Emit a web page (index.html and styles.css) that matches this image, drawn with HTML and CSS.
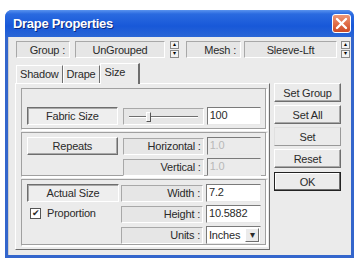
FILE: index.html
```html
<!DOCTYPE html>
<html lang="en">
<head>
	<meta charset="UTF-8">
	<title>Drape Properties</title>
	<link rel="stylesheet" href="styles.css">
</head>
<body>
	<div class="window">
		<div class="titlebar">
			<span class="title">Drape Properties</span>
			<span class="close">
				<svg width="13" height="13" viewBox="0 0 13 13"><path d="M2 2 L11 11 M11 2 L2 11" stroke="#fff" stroke-width="2.4" stroke-linecap="round"/></svg>
			</span>
		</div>
		<div class="client">
			<div class="toprow">
				<div class="field lbl group-lbl">Group :</div>
				<div class="field val group-val">UnGrouped</div>
				<div class="spin"><span>&#9652;</span><span>&#9662;</span></div>
				<div class="field lbl mesh-lbl">Mesh :</div>
				<div class="field val mesh-val">Sleeve-Lft</div>
				<div class="spin"><span>&#9652;</span><span>&#9662;</span></div>
			</div>
			<div class="main">
				<div class="tabarea">
					<div class="tabs">
						<div class="tab">Shadow</div>
						<div class="tab">Drape</div>
						<div class="tab active">Size</div>
					</div>
					<div class="panel">
						<div class="section sec-fabric">
							<div class="row">
								<div class="btn sunk wide">Fabric Size</div>
								<div class="field slider"><span class="track"></span><span class="thumb"></span></div>
								<div class="input">100</div>
							</div>
						</div>
						<div class="section sec-repeat">
							<div class="row">
								<div class="btn wide">Repeats</div>
								<div class="field cap">Horizontal :</div>
								<div class="input off">1.0</div>
							</div>
							<div class="row">
								<div class="spacer"></div>
								<div class="field cap">Vertical :</div>
								<div class="input off">1.0</div>
							</div>
						</div>
						<div class="section sec-actual">
							<div class="cols">
								<div class="leftcol">
									<div class="btn sunk wide">Actual Size</div>
									<label class="check"><span class="box">&#10004;</span>Proportion</label>
								</div>
								<div class="rightcol">
									<div class="row">
										<div class="field cap">Width :</div>
										<div class="input">7.2</div>
									</div>
									<div class="row">
										<div class="field cap">Height :</div>
										<div class="input">10.5882</div>
									</div>
									<div class="row">
										<div class="field cap">Units :</div>
										<div class="input select">Inches<span class="arrow">&#9662;</span></div>
									</div>
								</div>
							</div>
						</div>
					</div>
				</div>
				<div class="buttons">
					<div class="btn side">Set Group</div>
					<div class="btn side">Set All</div>
					<div class="btn side flat">Set</div>
					<div class="btn side">Reset</div>
					<div class="btn side ok">OK</div>
				</div>
			</div>
		</div>
	</div>
</body>
</html>
```

FILE: styles.css
```css
body {
	margin: 0;
	background: #fff;
	font-family: "Liberation Sans", Arial, sans-serif;
	font-size: 11px;
	letter-spacing: -0.2px;
	color: #2a2a2a;
}

.window {
	margin: 10px 0 0 5px;
	width: 349px;
	height: 248px;
	box-sizing: border-box;
	background: #3466cc;
	border-radius: 7px 7px 0 0;
	padding: 0 3px 3px 3px;
	display: flex;
	flex-direction: column;
}

.titlebar {
	height: 27px;
	margin: 0 -3px;
	padding: 0 3px 0 8px;
	border-radius: 7px 7px 0 0;
	background: linear-gradient(#5a93ee 0%, #2a6ae0 15%, #1858d8 60%, #2a66d6 100%);
	display: flex;
	align-items: center;
	justify-content: space-between;
}

.title {
	color: #fff;
	font-weight: bold;
	font-size: 13px;
	letter-spacing: -0.3px;
	text-shadow: 1px 1px 0 #0a2a80;
}

.close {
	width: 19px;
	height: 19px;
	box-sizing: border-box;
	border: 1px solid #fff;
	border-radius: 3px;
	background: linear-gradient(#ee9878, #de6a44 55%, #cc4a26);
	display: flex;
	align-items: center;
	justify-content: center;
}

.client {
	flex: 1;
	background: #ebebeb;
	border-left: 1px solid #cfcfcf;
	padding: 4px 0 0 7px;
}

.toprow {
	display: flex;
	align-items: center;
	height: 17px;
}

.field {
	box-sizing: border-box;
	background: #e6e6e6;
	border: 1px solid;
	border-color: #a8a8a8 #fff #fff #a8a8a8;
	height: 17px;
	display: flex;
	align-items: center;
}

.lbl {
	justify-content: flex-end;
	padding-right: 4px;
}

.val {
	justify-content: center;
}

.group-lbl { width: 54px; }
.group-val { width: 90px; margin-left: 5px; }
.mesh-lbl { width: 55px; margin-left: 7px; }
.mesh-val { width: 93px; margin-left: 3px; }

.spin {
	width: 9px;
	height: 17px;
	margin-left: 5px;
	display: flex;
	flex-direction: column;
	gap: 1px;
}

.spin span {
	flex: 1;
	background: #f2f2f2;
	border: 1px solid #8a8a8a;
	font-size: 6px;
	line-height: 5px;
	text-align: center;
	color: #000;
}

.mesh-val + .spin { margin-left: 4px; }

.main {
	display: flex;
	margin-top: 5px;
}

.tabarea {
	width: 255px;
	margin-left: -1px;
}

.tabs {
	display: flex;
	align-items: flex-end;
	height: 20px;
	padding-left: 1px;
}

.tab {
	height: 18px;
	box-sizing: border-box;
	padding: 2px 3px 0 3px;
	border: 1px solid #fff;
	border-right-color: #6e6e6e;
	border-bottom: none;
	background: #ebebeb;
}

.tab.active {
	height: 21px;
	margin-bottom: -1px;
	padding: 2px 13px 0 4px;
	position: relative;
	z-index: 1;
	border-right: 2px solid #6e6e6e;
}

.panel {
	box-sizing: border-box;
	height: 167px;
	border: 1px solid;
	border-color: #fff #6e6e6e #6e6e6e #fff;
	padding: 4px 2px 4px 5px;
}

.section {
	border: 1px solid;
	border-color: #a0a0a0 #fff #fff #a0a0a0;
	box-shadow: inset -1px -1px 0 #a0a0a0, 1px 1px 0 #fff;
	padding: 0 5px;
}

.sec-fabric {
	height: 42px;
	box-sizing: border-box;
	display: flex;
	align-items: flex-end;
	padding-bottom: 4px;
}

.sec-repeat {
	height: 45px;
	box-sizing: border-box;
	margin-top: 2px;
	padding-top: 4px;
	display: flex;
	flex-direction: column;
	gap: 3px;
}

.sec-actual {
	height: 67px;
	box-sizing: border-box;
	margin-top: 2px;
	padding-top: 4px;
}

.row {
	display: flex;
	align-items: center;
	gap: 3px;
}

.sec-fabric .row,
.sec-repeat .row {
	width: 100%;
}

.btn {
	box-sizing: border-box;
	height: 18px;
	display: flex;
	align-items: center;
	justify-content: center;
	background: #ebebeb;
	border: 1px solid;
	border-color: #fff #6e6e6e #6e6e6e #fff;
	box-shadow: inset -1px -1px 0 #a8a8a8;
}

.btn.sunk {
	border-color: #6e6e6e #fff #fff #6e6e6e;
	box-shadow: inset 1px 1px 0 #a8a8a8;
	background: #eeeeee;
}

.wide {
	width: 92px;
	margin-right: 2px;
}

.spacer {
	width: 92px;
	margin-right: 2px;
}

.cap {
	width: 82px;
	justify-content: flex-end;
	padding-right: 2px;
}

.slider {
	width: 82px;
	position: relative;
}

.track {
	position: absolute;
	left: 5px;
	right: 5px;
	top: 7px;
	height: 1px;
	background: #6e6e6e;
	border-bottom: 1px solid #fff;
}

.thumb {
	position: absolute;
	left: 22px;
	top: 3px;
	width: 3px;
	height: 8px;
	background: #ebebeb;
	border: 1px solid;
	border-color: #fff #555 #555 #fff;
}

.input {
	box-sizing: border-box;
	width: 55px;
	height: 18px;
	background: #fff;
	border: 1px solid;
	border-color: #7a7a7a #e8e8e8 #e8e8e8 #7a7a7a;
	padding-left: 2px;
	line-height: 15px;
}

.input.off {
	background: #ebebeb;
	color: #b8b8b8;
}

.select {
	display: flex;
	justify-content: space-between;
	align-items: center;
	padding-right: 1px;
}

.arrow {
	width: 14px;
	height: 14px;
	box-sizing: border-box;
	background: #ebebeb;
	border: 1px solid;
	border-color: #fff #6e6e6e #6e6e6e #fff;
	font-size: 10px;
	line-height: 12px;
	text-align: center;
}

.cols {
	display: flex;
}

.leftcol {
	display: flex;
	flex-direction: column;
}

.check {
	display: flex;
	align-items: center;
	margin: 5px 0 0 3px;
	gap: 6px;
}

.box {
	width: 11px;
	height: 11px;
	box-sizing: border-box;
	background: #fff;
	border: 1px solid #555;
	font-size: 9px;
	line-height: 9px;
	text-align: center;
}

.rightcol {
	display: flex;
	flex-direction: column;
	gap: 3px;
}

.rightcol .row {
	height: 18px;
}

.buttons {
	display: flex;
	flex-direction: column;
	margin-left: 4px;
	padding-top: 20px;
	gap: 3px;
}

.side {
	width: 67px;
	height: 19px;
}

.side.flat {
	box-shadow: none;
	border-color: #e0e0e0 #999 #999 #e0e0e0;
}

.side.ok {
	margin-top: 1px;
	border: 1px solid #222;
	box-shadow: inset -1px -1px 0 #6e6e6e, inset 1px 1px 0 #fff;
}
```
